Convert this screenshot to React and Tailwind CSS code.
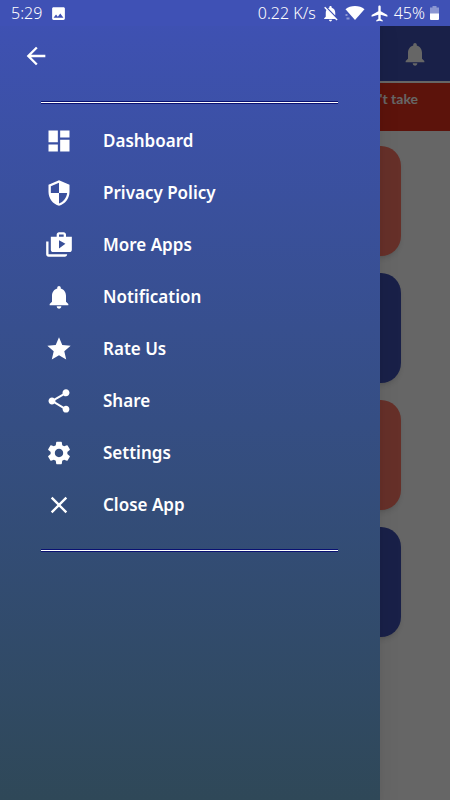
import {
  MdArrowBack,
  MdAirplanemodeActive,
  MdClose,
  MdDashboard,
  MdImage,
  MdNotifications,
  MdNotificationsOff,
  MdSecurity,
  MdSettings,
  MdShare,
  MdShopTwo,
  MdStar,
} from "react-icons/md";

const menuItems = [
  { label: "Dashboard", Icon: MdDashboard },
  { label: "Privacy Policy", Icon: MdSecurity },
  { label: "More Apps", Icon: MdShopTwo },
  { label: "Notification", Icon: MdNotifications },
  { label: "Rate Us", Icon: MdStar },
  { label: "Share", Icon: MdShare },
  { label: "Settings", Icon: MdSettings },
  { label: "Close App", Icon: MdClose },
];

const cards = ["coral", "indigo", "coral", "indigo"];

function WifiIcon() {
  return (
    <svg viewBox="0 0 20 16" className="w-5 h-4" fill="currentColor">
      <path d="M10 15 0.5 4.2C3 1.9 6.4 1 10 1s7 .9 9.500 3.200z" />
      <path opacity="0.4" d="M0.500 9h2v2h-2zM1.500 12.500h3v2h-3z" />
    </svg>
  );
}

function BatteryIcon() {
  return (
    <svg viewBox="0 0 9 14" className="w-[9px] h-3.5" fill="currentColor">
      <path opacity="0.4" d="M2.500 0h4v1.500H9V8H0V1.500h2.500z" />
      <path d="M0 7.500h9V13a1 1 0 0 1-1 1H1a1 1 0 0 1-1-1z" />
    </svg>
  );
}

function StatusBar() {
  return (
    <div className="relative z-20 flex h-[26px] items-center justify-between bg-[#3f51b5] px-[11px] text-base font-light text-white">
      <div className="flex items-center gap-2">
        <span>5:29</span>
        <MdImage size={17} />
      </div>
      <div className="flex items-center gap-[5px]">
        <span>0.22 K/s</span>
        <MdNotificationsOff size={19} />
        <WifiIcon />
        <MdAirplanemodeActive size={19} />
        <span>45%</span>
        <BatteryIcon />
      </div>
    </div>
  );
}

function Home() {
  return (
    <div>
      <header className="flex h-[55px] items-center justify-end bg-[#3f51b5] pr-[21px]">
        <button aria-label="Notifications" className="text-white">
          <MdNotifications size={28} />
        </button>
      </header>
      <div className="mt-0.5 h-12 bg-[#e5301c] px-8 pt-1.5 text-right font-[Lato,sans-serif] text-sm font-bold text-white">
        't take
      </div>
      <div className="flex flex-col gap-[17px] px-[49px] pt-[15px]">
        {cards.map((color, index) => (
          <div
            key={index}
            className={`h-[110px] rounded-[20px] shadow-md ${
              color === "coral" ? "bg-[#ff7866]" : "bg-[#3f51b5]"
            }`}
          ></div>
        ))}
      </div>
    </div>
  );
}

function Divider() {
  return <div className="h-[3px] border-y border-[#0a1172] bg-white"></div>;
}

function Drawer() {
  return (
    <aside className="absolute inset-y-0 left-0 w-[380px] max-w-full bg-linear-to-b from-[#3f51b5] to-[#2f4858] pt-[26px] text-white shadow-xl">
      <button aria-label="Back" className="ml-[22px] mt-4 block">
        <MdArrowBack size={28} />
      </button>
      <nav className="ml-[41px] mr-[42px] mt-[31px]">
        <Divider />
        <ul className="pt-[11px] pb-[18px]">
          {menuItems.map(({ label, Icon }) => (
            <li key={label}>
              <button className="flex h-[52px] w-full items-center gap-[30px] pl-1 text-left text-[17px] font-semibold">
                <Icon size={28} />
                {label}
              </button>
            </li>
          ))}
        </ul>
        <Divider />
      </nav>
    </aside>
  );
}

export default function App() {
  return (
    <div className="relative min-h-screen overflow-hidden bg-white font-['Noto_Sans',sans-serif]">
      <StatusBar />
      <Home />
      <div className="absolute inset-0 bg-black/60"></div>
      <Drawer />
    </div>
  );
}
